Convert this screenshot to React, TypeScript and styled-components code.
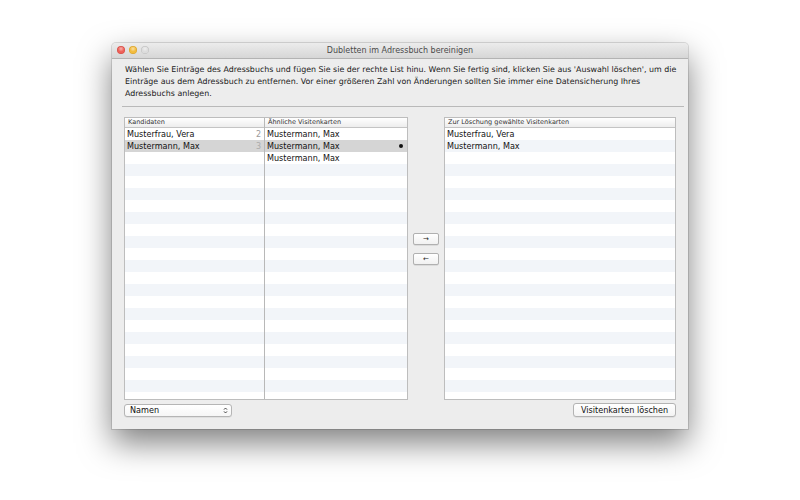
import styled, { createGlobalStyle } from "styled-components"

const GlobalStyle = createGlobalStyle`
  html, body { margin:0; padding:0; background:#ffffff; }
  body { font-family: "DejaVu Sans", "Noto Sans", sans-serif; }
`

const Page = styled.div`
  width:800px;
  height:500px;
  box-sizing:border-box;
  padding:43px 0 0 112px;
  overflow:hidden;
`

const Window = styled.div`
  width:576px;
  height:386px;
  background:#ededed;
  border-radius:4px 4px 0 0;
  box-shadow: 0 14px 32px rgba(0,0,0,0.5), 0 0 0 1px rgba(0,0,0,0.12);
  display:flex;
  flex-direction:column;
  overflow:hidden;
`

const TitleBar = styled.div`
  height:15px;
  flex:none;
  position:relative;
  display:flex;
  align-items:center;
  justify-content:center;
  background:linear-gradient(#ececec, #d6d6d6);
  border-bottom:1px solid #b3b3b3;
  border-radius:4px 4px 0 0;
  font-size:8px;
  color:#4a4a4a;
`

const Lights = styled.div`
  position:absolute;
  left:5px;
  top:3px;
  display:flex;
  gap:4px;
`

const Light = styled.span<{ c: string; edge: string }>`
  width:8px;
  height:8px;
  border-radius:50%;
  background:radial-gradient(circle at 50% 35%, #ffffff88 0, transparent 45%), ${({ c }) => c};
  box-shadow: inset 0 0 0 0.5px ${({ edge }) => edge};
`

const Body = styled.div`
  flex:1;
  min-height:0;
  display:flex;
  flex-direction:column;
  padding:5px 12px 12px 12px;
`

const Intro = styled.p`
  margin:0 0 0 1px;
  font-size:7.9px;
  line-height:12px;
  color:#1a1a1a;
  white-space:nowrap;
`

const Separator = styled.div`
  height:1px;
  background:#b9b9b9;
  margin:6px -8px 10px -2px;
`

const Main = styled.div`
  height:283px;
  flex:none;
  display:flex;
`

const Table = styled.div<{ w: number }>`
  width:${({ w }) => w}px;
  box-sizing:border-box;
  border:1px solid #bdbdbd;
  background:#ffffff;
  display:flex;
  overflow:hidden;
`

const Column = styled.div<{ w?: number; divider?: boolean }>`
  ${({ w }) => (w ? `width:${w}px;` : "flex:1;")}
  display:flex;
  flex-direction:column;
  border-right:${({ divider }) => (divider ? "1px solid #b8b8b8" : "none")};
  min-width:0;
`

const Header = styled.div`
  height:9px;
  flex:none;
  background:linear-gradient(#ffffff, #ededed);
  border-bottom:1px solid #c4c4c4;
  font-size:6.5px;
  line-height:9px;
  padding-left:3px;
  color:#333;
  white-space:nowrap;
`

const Row = styled.div<{ odd: boolean; selected?: boolean }>`
  height:12px;
  flex:none;
  display:flex;
  align-items:center;
  justify-content:space-between;
  padding:0 3px 0 2px;
  font-size:8.1px;
  color:#111;
  background:${({ odd, selected }) => (selected ? "#d5d5d5" : odd ? "#f2f5f9" : "#ffffff")};
  white-space:nowrap;
`

const Count = styled.span<{ selected?: boolean }>`
  color:${({ selected }) => (selected ? "#ababab" : "#9a9a9a")};
  font-size:8px;
`

const Dot = styled.span`
  width:4px;
  height:4px;
  border-radius:50%;
  background:#111;
  margin-right:1px;
`

const Middle = styled.div`
  width:36px;
  display:flex;
  flex-direction:column;
  align-items:center;
  justify-content:center;
  gap:8px;
  padding-bottom:20px;
`

const SmallButton = styled.button`
  width:26px;
  height:12px;
  padding:0;
  border:1px solid #b0b0b0;
  border-radius:2px;
  background:linear-gradient(#ffffff, #f1f1f1);
  box-shadow:0 0.5px 0 rgba(0,0,0,0.15);
  font-family:"DejaVu Sans", sans-serif;
  font-size:7px;
  line-height:10px;
  color:#222;
`

const Footer = styled.div`
  display:flex;
  justify-content:space-between;
  align-items:center;
  margin-top:3px;
  height:14px;
`

const Popup = styled.div`
  width:108px;
  height:13px;
  box-sizing:border-box;
  border:1px solid #b5b5b5;
  border-radius:3px;
  background:linear-gradient(#ffffff, #f6f6f6);
  box-shadow:0 0.5px 0 rgba(0,0,0,0.12);
  display:flex;
  align-items:center;
  justify-content:space-between;
  padding:0 3px 0 5px;
  font-size:8.1px;
  color:#111;
`

const PushButton = styled.button`
  height:14px;
  width:103px;
  padding:0;
  border:1px solid #b3b3b3;
  border-radius:3px;
  background:linear-gradient(#ffffff, #f3f3f3);
  box-shadow:0 0.5px 0 rgba(0,0,0,0.12);
  font-family:"DejaVu Sans", sans-serif;
  font-size:8.1px;
  color:#111;
`

const ROWS = 23

const candidates = [
  { name: "Musterfrau, Vera", count: 2 },
  { name: "Mustermann, Max", count: 3 },
]
const similar = ["Mustermann, Max", "Mustermann, Max", "Mustermann, Max"]
const chosen = ["Musterfrau, Vera", "Mustermann, Max"]

const range = Array.from({ length: ROWS }, (_, i) => i)

const Arrows = () => (
  <svg width="5" height="7" viewBox="0 0 5 7">
    <path d="M1 2.6 L2.5 1 L4 2.6 M1 4.4 L2.5 6 L4 4.4" stroke="#333" strokeWidth="0.9" fill="none" />
  </svg>
)

export default function App() {
  return (
    <Page>
      <GlobalStyle />
      <Window>
        <TitleBar>
          <Lights>
            <Light c="#ee5f57" edge="#c9443d" />
            <Light c="#f2bb3c" edge="#cf9a26" />
            <Light c="#dcdcdc" edge="#b9b9b9" />
          </Lights>
          Dubletten im Adressbuch bereinigen
        </TitleBar>
        <Body>
          <Intro>
            Wählen Sie Einträge des Adressbuchs und fügen Sie sie der rechte List hinu. Wenn Sie fertig sind, klicken Sie aus 'Auswahl löschen', um die
            <br />
            Einträge aus dem Adressbuch zu entfernen. Vor einer größeren Zahl von Änderungen sollten Sie immer eine Datensicherung Ihres
            <br />
            Adressbuchs anlegen.
          </Intro>
          <Separator />
          <Main>
            <Table w={284}>
              <Column w={139} divider>
                <Header>Kandidaten</Header>
                {range.map((i) => {
                  const c = candidates[i]
                  const sel = i === 1
                  return (
                    <Row key={i} odd={i % 2 === 1} selected={sel}>
                      <span>{c ? c.name : ""}</span>
                      {c && <Count selected={sel}>{c.count}</Count>}
                    </Row>
                  )
                })}
              </Column>
              <Column>
                <Header>Ähnliche Visitenkarten</Header>
                {range.map((i) => (
                  <Row key={i} odd={i % 2 === 1} selected={i === 1}>
                    <span>{similar[i] ?? ""}</span>
                    {i === 1 && <Dot />}
                  </Row>
                ))}
              </Column>
            </Table>
            <Middle>
              <SmallButton>→</SmallButton>
              <SmallButton>←</SmallButton>
            </Middle>
            <Table w={232}>
              <Column>
                <Header>Zur Löschung gewählte Visitenkarten</Header>
                {range.map((i) => (
                  <Row key={i} odd={i % 2 === 1}>
                    <span>{chosen[i] ?? ""}</span>
                  </Row>
                ))}
              </Column>
            </Table>
          </Main>
          <Footer>
            <Popup>
              <span>Namen</span>
              <Arrows />
            </Popup>
            <PushButton>Visitenkarten löschen</PushButton>
          </Footer>
        </Body>
      </Window>
    </Page>
  )
}
